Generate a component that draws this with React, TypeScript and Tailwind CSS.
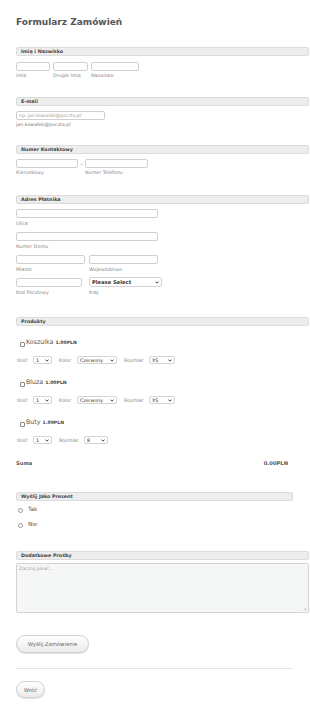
import { ReactNode } from "react";

const SectionHeader = ({ title, w = "w-[293px]" }: { title: string; w?: string }) => {
  return (
    <div className={`${w} h-[9px] flex items-center pl-[4px] bg-[#ededed] border border-[#dcdcdc] rounded-[2px] text-[4.8px] leading-[5px] font-bold text-[#444]`}>
      {title}
    </div>
  );
};

const Input = ({ w, h = "h-[9px]", placeholder }: { w: string; h?: string; placeholder?: string }) => {
  return (
    <div className={`${w} ${h} border border-[#cfcfcf] rounded-[2px] bg-white flex items-center pl-[2px] text-[4.6px] leading-[5px] text-[#9a9a9a]`}>
      {placeholder}
    </div>
  );
};

const Label = ({ children, w }: { children: ReactNode; w?: string }) => {
  return <div className={`${w ?? ""} h-[5px] text-[4.8px] leading-[5px] text-[#888] whitespace-nowrap`}>{children}</div>;
};

const Chevron = () => (
  <svg width="4" height="3" viewBox="0 0 8 6" className="shrink-0">
    <path d="M1 1.2 L4 4.4 L7 1.2" fill="none" stroke="#333" strokeWidth="1.8" />
  </svg>
);

const Select = ({ w, value, h = "h-[8px]", size = "text-[4.7px]" }: { w: string; value: string; h?: string; size?: string }) => {
  return (
    <div className={`${w} ${h} ${size} leading-[5px] border border-[#d4d4d4] rounded-[2px] bg-white flex items-center justify-between px-[2px] text-[#333] shrink-0`}>
      <span>{value}</span>
      <Chevron />
    </div>
  );
};

const Product = ({ name, sizeValue, color = true, first = false }: { name: string; sizeValue: string; color?: boolean; first?: boolean }) => {
  return (
    <div className={first ? "mt-[13px]" : "mt-[15px]"}>
      <div className="flex items-start pl-[4px] h-[7px]">
        <div className="w-[5px] h-[5px] mt-[3px] border border-[#888] rounded-[1px] bg-white shrink-0" />
        <span className="text-[6.3px] leading-[6px] text-[#555] ml-[1px]">{name}</span>
        <span className="text-[4.6px] leading-[6px] font-bold text-[#444] ml-[2px] mt-[0.5px]">1.00PLN</span>
      </div>
      <div className="flex items-center h-[8px] mt-[10px] text-[4.8px] leading-[5px] text-[#888] whitespace-nowrap">
        <span className="ml-[1px] w-[16px]">Ilość</span>
        <Select w="w-[19px]" value="1" />
        {color && (
          <>
            <span className="ml-[7px] w-[18px]">Kolor</span>
            <Select w="w-[40px]" value="Czerwony" />
          </>
        )}
        <span className="ml-[7px] w-[25px]">Rozmiar</span>
        <Select w={color ? "w-[26px]" : "w-[24px]"} value={sizeValue} />
      </div>
    </div>
  );
};

const Radio = ({ label, mt }: { label: string; mt: string }) => (
  <div className={`flex items-start pl-[2px] h-[6px] ${mt}`}>
    <div className="w-[5px] h-[5px] mt-[1px] border border-[#999] rounded-full bg-white shrink-0" />
    <span className="ml-[5px] text-[5.7px] leading-[5px] text-[#555]">{label}</span>
  </div>
);

const Button = ({ children, w, h }: { children: ReactNode; w: string; h: string }) => (
  <div className={`${w} ${h} rounded-full border border-[#d0d0d0] bg-gradient-to-b from-white to-[#ebebeb] shadow-[0_1px_1px_rgba(0,0,0,0.12)] flex items-center justify-center text-[5.3px] leading-[6px] text-[#666]`}>
    {children}
  </div>
);

const App = () => {
  return (
    <div className="w-[310px] h-[707px] overflow-hidden bg-white pl-[16px] leading-none" style={{ fontFamily: '"DejaVu Sans", Verdana, sans-serif' }}>
      <h1 className="pt-[16px] h-[28px] text-[9px] leading-[12px] font-bold text-[#555]">Formularz Zamówień</h1>

      {/* Imię i Nazwisko */}
      <div className="mt-[19px]">
        <SectionHeader title="Imię i Nazwisko" />
        <div className="flex mt-[6px] gap-[3px]">
          <Input w="w-[34px]" />
          <Input w="w-[35px]" />
          <Input w="w-[48px]" />
        </div>
        <div className="flex mt-[2px]">
          <Label w="w-[37px]">Imię</Label>
          <Label w="w-[38px]">Drugie Imię</Label>
          <Label>Nazwisko</Label>
        </div>
      </div>

      {/* E-mail */}
      <div className="mt-[19px]">
        <SectionHeader title="E-mail" />
        <div className="mt-[5px]">
          <Input w="w-[89px]" placeholder="np: jan.kowalski@poczta.pl" />
        </div>
        <div className="mt-[2px] h-[5px] text-[4.7px] leading-[5px] text-[#777]">jan.kowalski@poczta.pl</div>
      </div>

      {/* Numer Kontaktowy */}
      <div className="mt-[18px]">
        <SectionHeader title="Numer Kontaktowy" />
        <div className="flex items-center mt-[5px]">
          <Input w="w-[62px]" />
          <span className="w-[7px] text-center text-[6px] leading-[6px] text-[#666]">-</span>
          <Input w="w-[63px]" />
        </div>
        <div className="flex mt-[2px]">
          <Label w="w-[69px]">Kierunkowy</Label>
          <Label>Numer Telefonu</Label>
        </div>
      </div>

      {/* Adres Płatnika */}
      <div className="mt-[20px]">
        <SectionHeader title="Adres Płatnika" />
        <div className="mt-[5px]">
          <Input w="w-[142px]" />
        </div>
        <div className="mt-[3px]">
          <Label>Ulica</Label>
        </div>
        <div className="mt-[6px]">
          <Input w="w-[142px]" />
        </div>
        <div className="mt-[3px]">
          <Label>Numer Domu</Label>
        </div>
        <div className="flex gap-[4px] mt-[6px]">
          <Input w="w-[69px]" />
          <Input w="w-[69px]" />
        </div>
        <div className="flex mt-[3px]">
          <Label w="w-[73px]">Miasto</Label>
          <Label>Województwo</Label>
        </div>
        <div className="flex items-center gap-[7px] mt-[5px] h-[10px]">
          <Input w="w-[66px]" />
          <Select w="w-[73px]" h="h-[10px]" size="text-[5.2px] font-bold" value="Please Select" />
        </div>
        <div className="flex mt-[3px]">
          <Label w="w-[73px]">Kod Pocztowy</Label>
          <Label>Kraj</Label>
        </div>
      </div>

      {/* Produkty */}
      <div className="mt-[22px]">
        <SectionHeader title="Produkty" />
        <Product name="Koszulka" sizeValue="XS" first />
        <Product name="Bluza" sizeValue="XS" />
        <Product name="Buty" sizeValue="8" color={false} />
        <div className="flex w-[272px] justify-between h-[6px] mt-[16px] text-[5.2px] leading-[6px] font-bold text-[#555]">
          <span>Suma</span>
          <span>0.00PLN</span>
        </div>
      </div>

      {/* Wyślij Jako Prezent */}
      <div className="mt-[26px]">
        <SectionHeader title="Wyślij Jako Prezent" w="w-[277px]" />
        <Radio label="Tak" mt="mt-[6px]" />
        <Radio label="Nie" mt="mt-[9px]" />
      </div>

      {/* Dodatkowe Prośby */}
      <div className="mt-[23px]">
        <SectionHeader title="Dodatkowe Prośby" />
        <div className="relative mt-[3px] w-[293px] h-[50px] border border-[#d4d4d4] rounded-[2px] bg-[#f5f6f6] pl-[2px] pt-[2px] text-[4.6px] leading-[5px] text-[#9a9a9a]">
          Zacznij pisać...
          <svg width="4" height="4" viewBox="0 0 4 4" className="absolute right-[1px] bottom-[1px]">
            <path d="M0.5 3.5 L3.5 0.5 M2 3.5 L3.5 2" stroke="#999" strokeWidth="0.5" />
          </svg>
        </div>
      </div>

      <div className="mt-[22px]">
        <Button w="w-[73px]" h="h-[18px]">Wyślij Zamówienie</Button>
      </div>
      <div className="mt-[15px] w-[277px] border-t border-[#e6e6e6]" />
      <div className="mt-[12px]">
        <Button w="w-[29px]" h="h-[17px]">Wróć</Button>
      </div>
    </div>
  );
};

export default App;
